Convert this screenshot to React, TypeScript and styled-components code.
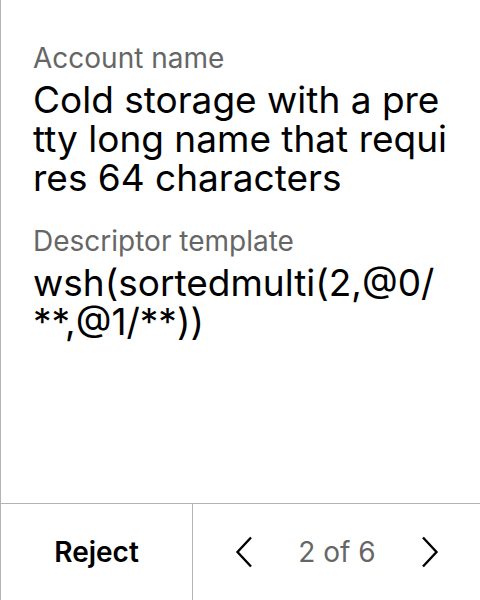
import React from "react";
import styled, { createGlobalStyle } from "styled-components";

const Global = createGlobalStyle`
  html, body { margin: 0; padding: 0; background: #fff; }
  body { font-family: Inter, "Noto Sans", sans-serif; -webkit-font-smoothing: antialiased; }
`;

const Screen = styled.div`
  width: 480px;
  height: 600px;
  box-sizing: border-box;
  border-left: 1px solid #b3b3b3;
  display: flex;
  flex-direction: column;
  background: #fff;
`;

const Content = styled.div`
  flex: 1;
  padding: 42px 32px 0 32px;
  display: flex;
  flex-direction: column;
  gap: 28px;
`;

const Field = styled.div`
  display: flex;
  flex-direction: column;
  gap: 6px;
`;

const Label = styled.div`
  font-size: 28px;
  line-height: 32px;
  color: #666;
`;

const Value = styled.div`
  font-size: 37px;
  line-height: 39px;
  color: #000;
  font-weight: 400;
  word-break: break-all;
  width: 416px;
`;

const Footer = styled.div`
  height: 96px;
  border-top: 1px solid #b3b3b3;
  display: grid;
  grid-template-columns: 192px 1fr;
`;

const RejectButton = styled.button`
  border: none;
  border-right: 1px solid #b3b3b3;
  background: none;
  font-family: Inter, sans-serif;
  font-size: 28px;
  font-weight: 600;
  color: #000;
  padding: 0;
`;

const Nav = styled.div`
  display: grid;
  grid-template-columns: 101px 1fr 100px;
  align-items: center;
`;

const Arrow = styled.button`
  border: none;
  background: none;
  padding: 0;
  height: 100%;
  display: flex;
  align-items: center;
  justify-content: center;
`;

const Pager = styled.div`
  text-align: center;
  font-size: 28px;
  color: #666;
`;

const Chevron = ({ dir }: { dir: "left" | "right" }) => (
  <svg width="18" height="32" viewBox="0 0 18 32">
    <path
      d={dir === "left" ? "M16 1.5 L2.5 16 L16 30.5" : "M2 1.5 L15.5 16 L2 30.5"}
      fill="none"
      stroke="#000"
      strokeWidth="2.4"
    />
  </svg>
);

export default function App() {
  return (
    <>
      <Global />
      <Screen>
        <Content>
          <Field>
            <Label>Account name</Label>
            <Value>Cold storage with a pretty long name that requires 64 characters</Value>
          </Field>
          <Field>
            <Label>Descriptor template</Label>
            <Value>wsh(sortedmulti(2,@0/**,@1/**))</Value>
          </Field>
        </Content>
        <Footer>
          <RejectButton>Reject</RejectButton>
          <Nav>
            <Arrow><Chevron dir="left" /></Arrow>
            <Pager>2 of 6</Pager>
            <Arrow><Chevron dir="right" /></Arrow>
          </Nav>
        </Footer>
      </Screen>
    </>
  );
}
